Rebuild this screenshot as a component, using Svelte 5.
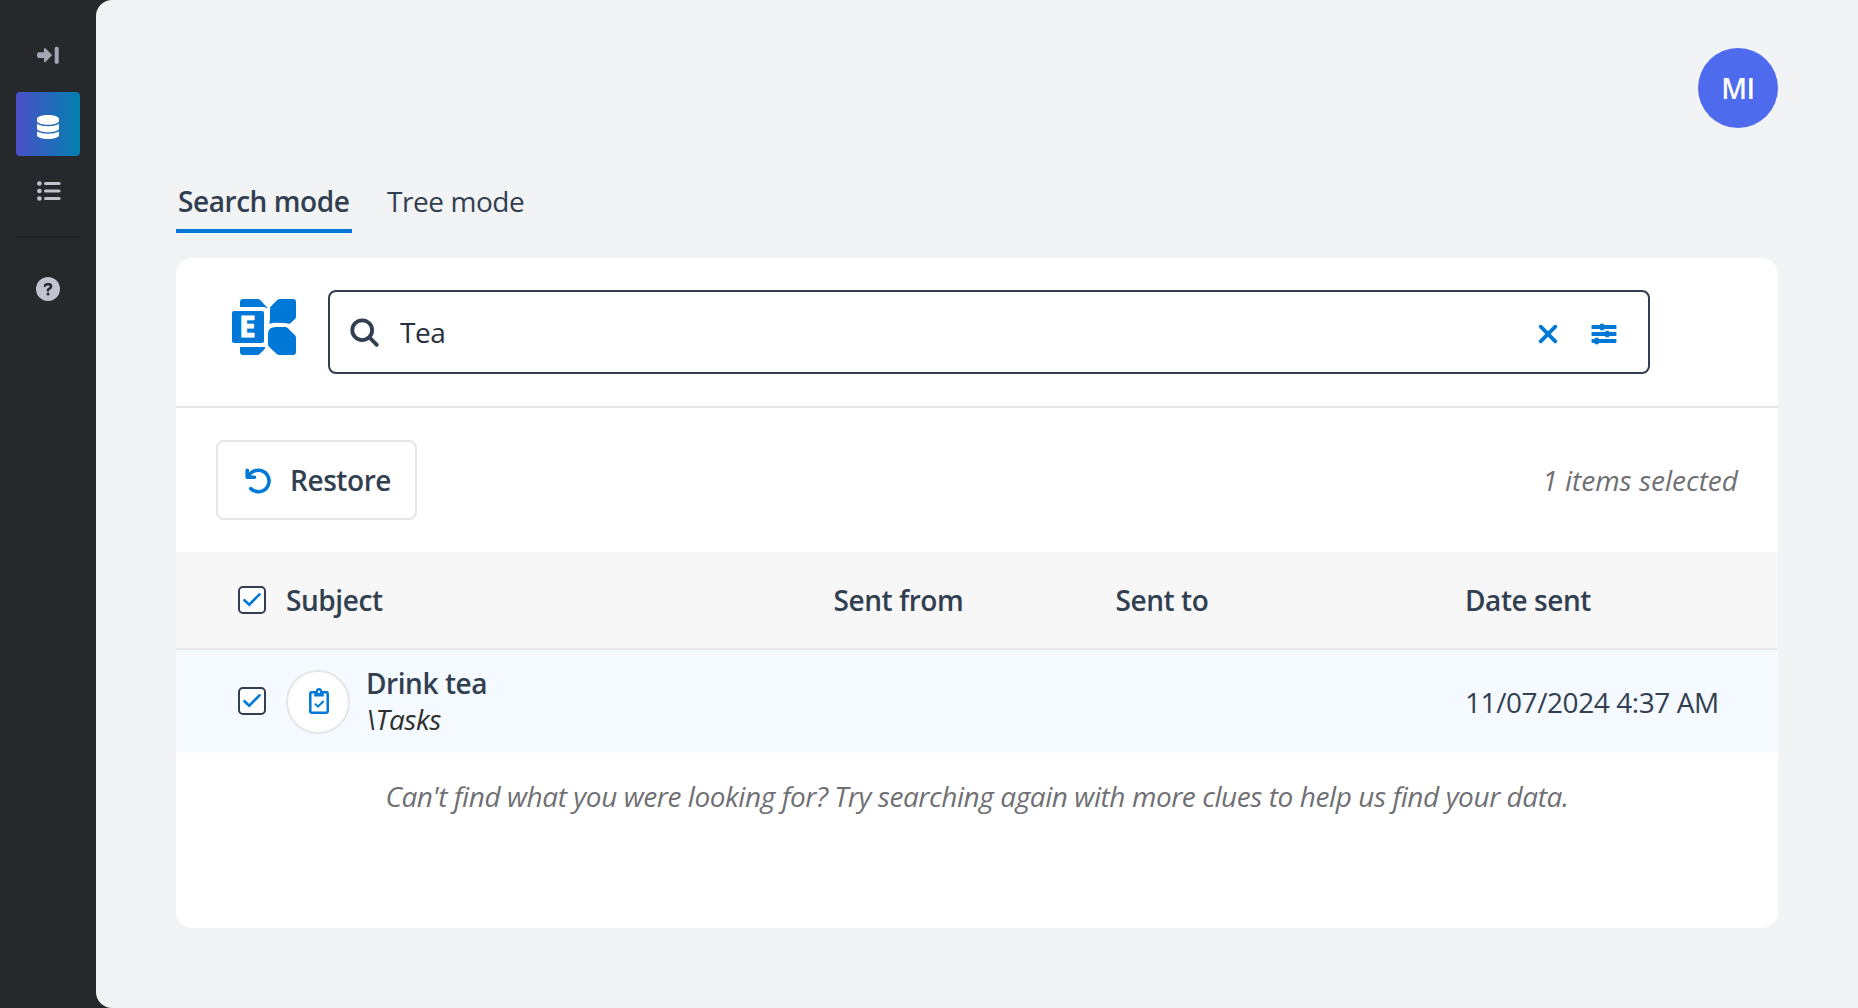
<script>
  const nav = ['expand', 'database', 'list'];
  let query = $state('Tea');
  const items = [
    { subject: 'Drink tea', path: '\\Tasks', from: '', to: '', date: '11/07/2024 4:37 AM' }
  ];
</script>

{#snippet checkbox()}
  <span class="check">
    <svg width="18" height="14" viewBox="0 0 18 14"><path d="M1.5 7.2 6.2 11.6 16.5 1.4" /></svg>
  </span>
{/snippet}

<div class="app">
  <nav class="sidebar">
    {#each nav as name}
      <div class="nav-item" class:active={name === 'database'}>
        {#if name === 'expand'}
          <svg class="expand" width="24" height="20" viewBox="0 0 24 20">
            <path d="M3 6.3H8V3.4Q8 1.2 9.7 2.6L15.6 8.6Q16.2 9.2 15.6 9.8L9.7 15.8Q8 17.2 8 15V12.1H3Q1 12.1 1 10.1V8.3Q1 6.3 3 6.3Z" />
            <rect x="18.7" y=".8" width="4" height="17" rx="1.6" />
          </svg>
        {:else if name === 'database'}
          <svg width="22" height="24" viewBox="0 0 448 512" preserveAspectRatio="none">
            <path d="M448 80v48c0 44.2-100.3 80-224 80S0 172.2 0 128V80C0 35.8 100.3 0 224 0S448 35.8 448 80zM393.2 214.7c20.8-7.4 39.9-16.9 54.8-28.6V288c0 44.2-100.3 80-224 80S0 332.2 0 288V186.1c14.9 11.8 34 21.2 54.8 28.6C99.7 230.7 159.5 240 224 240s124.3-9.3 169.2-25.3zM0 346.1c14.9 11.8 34 21.2 54.8 28.6C99.7 390.7 159.5 400 224 400s124.3-9.3 169.2-25.3c20.8-7.4 39.9-16.9 54.8-28.6V432c0 44.2-100.3 80-224 80S0 476.2 0 432V346.1z" />
          </svg>
        {:else}
          <svg class="list" width="24" height="20" viewBox="0 0 24 20">
            {#each [2.5, 10, 17.5] as y}
              <circle cx="2.4" cy={y} r="2.3" />
              <rect x="7" y={y - 1.5} width="16.6" height="3" rx="1.5" />
            {/each}
          </svg>
        {/if}
      </div>
    {/each}
    <div class="divider"></div>
    <div class="nav-item">
      <svg width="24" height="24" viewBox="0 0 24 24">
        <circle cx="12" cy="12" r="12" />
        <path class="mark" d="M8.9 8.9Q9.2 7.3 11 7.3H13Q15.1 7.5 15.1 9.4 15 10.7 13.8 11.4L12 12.5V13.4" />
        <circle class="dot" cx="12" cy="16.9" r="1.5" />
      </svg>
    </div>
  </nav>

  <main>
    <div class="top"><div class="avatar">MI</div></div>

    <div class="tabs">
      <div class="tab selected">Search mode</div>
      <div class="tab">Tree mode</div>
    </div>

    <section class="card">
      <div class="search-row">
        <svg class="logo" width="64" height="56" viewBox="0 0 64 56">
          <path d="M8 8V3Q8 0 11 0H25.5Q27.3 0 28.5 1.2L35.6 9 35 9.4Q33.5 8 31 8Z" />
          <path d="M38 8.3 45 1.3Q46.3 0 48 0H61Q64 0 64 3V17.5Q64 19 63 20L58.7 24.1Q57.8 25 56.5 24.7 53 23.8 44 23.8 40 23.9 37.3 25L38 20Z" />
          <path d="M36 34Q36.5 28 44 28H53Q54.8 28 56 29.2L62.8 36Q64 37.2 64 39V53Q64 56 61 56H47.5Q45.8 56 44.5 54.8L37.2 48Q36 46.8 36 45Z" />
          <path d="M8 48H33.2Q33.2 49.5 32 50.8L28 54.8Q26.8 56 25 56H11Q8 56 8 53Z" />
          <rect y="12" width="32" height="32" rx="2" />
          <text x="7.2" y="38.2">E</text>
        </svg>
        <div class="search-box">
          <svg class="glass" width="30" height="30" viewBox="0 0 30 30">
            <circle cx="12.2" cy="12.2" r="9.9" /><path d="M19.4 19.4 26.8 26.8" />
          </svg>
          <input bind:value={query} />
          <svg class="clear" width="20" height="20" viewBox="0 0 20 20"><path d="M2.7 2.7 17.3 17.3M17.3 2.7 2.7 17.3" /></svg>
          <svg class="tune" width="26" height="22" viewBox="0 0 26 22">
            <path d="M.6 4H25.4M.6 11H25.4M.6 18H25.4" />
            <path d="M11 .8V7.2M16.2 7.8V14.2M5.7 14.8V21.2" />
          </svg>
        </div>
      </div>

      <div class="toolbar">
        <button>
          <svg width="27" height="26" viewBox="0 0 27 26">
            <path d="M2.2 2.2V9.2H9.5M2.9 8.8C5.1 4.6 9 2.3 13.3 2.3A10.7 10.7 0 1 1 5.8 20.6" />
          </svg>
          Restore
        </button>
        <span class="count">1 items selected</span>
      </div>

      <div class="row head">
        {@render checkbox()}
        <span>Subject</span><span>Sent from</span><span>Sent to</span><span>Date sent</span>
      </div>

      {#each items as item}
        <div class="row item">
          {@render checkbox()}
          <div class="subject">
            <span class="badge">
              <svg width="20" height="26" viewBox="0 0 20 26">
                <rect x="1.3" y="4.3" width="17.4" height="20.4" rx="1.2" />
                <path class="clip" d="M5.2 3.2H6.7Q7.3 0 10 0T13.3 3.2H14.8V8.4H5.2Z" />
                <circle cx="10" cy="3.8" r="1.2" />
                <path class="tick" d="M6 15.6 9 18.6 14.6 13" />
              </svg>
            </span>
            <div class="names"><b>{item.subject}</b><i>{item.path}</i></div>
          </div>
          <span>{item.from}</span><span>{item.to}</span><span class="date">{item.date}</span>
        </div>
      {/each}

      <p class="hint">Can't find what you were looking for? Try searching again with more clues to help us find your data.</p>
    </section>
  </main>
</div>

<style>
  :global(body) { margin: 0; background: #27282c; }
  .app, .app * { box-sizing: border-box; }
  .app {
    display: flex; height: 1008px; background: #27282c; color: #323f50;
    font: 400 28px/36px "Open Sans", "Noto Sans", sans-serif;
    letter-spacing: -.43px;
  }
  svg { display: block; flex: none; }

  .sidebar { width: 96px; padding: 24px 16px; display: flex; flex-direction: column; }
  .nav-item { height: 64px; display: flex; align-items: center; justify-content: center; fill: #c0c4ce; border-radius: 4px; }
  .nav-item:first-child { margin-bottom: 4px; fill: #a3a6b4; }
  .nav-item.active { fill: #fff; background: linear-gradient(90deg, #4b50c8, #0380b0); padding-top: 6px; }
  .list { margin: 6px 0 0 1px; }
  .divider { height: 2px; background: #202124; margin: 16px 0 19px; }
  .mark { fill: none; stroke: #27282c; stroke-width: 2.4; stroke-linecap: round; stroke-linejoin: round; }
  .dot { fill: #27282c; }

  main { flex: 1; background: #f1f3f5; border-radius: 16px 0 0 16px; padding: 48px 80px; }
  .top { display: flex; justify-content: flex-end; }
  .avatar {
    width: 80px; height: 80px; border-radius: 50%; background: #4f6bed; color: #fff;
    display: flex; align-items: center; justify-content: center; font-weight: 600;
  }
  .tabs { display: flex; gap: 33px; margin-top: 48px; height: 57px; }
  .tab { padding: 7px 2px 0; height: 57px; }
  .selected { width: 176px; white-space: nowrap; font-weight: 600; border-bottom: 4px solid #0078d7; }

  .card { margin-top: 25px; height: 670px; background: #fff; border-radius: 16px; }
  .search-row { height: 150px; border-bottom: 2px solid #e6e6e6; padding: 32px 128px 0 56px; display: flex; gap: 32px; }
  .logo { margin-top: 9px; fill: #0078d7; }
  .logo text { font: 700 29px "Noto Sans", sans-serif; letter-spacing: 0; fill: #fff; stroke: #fff; stroke-width: 1.2; stroke-linejoin: round; }
  .search-box { flex: 1; height: 84px; border: 2px solid #323f50; border-radius: 8px; display: flex; align-items: center; padding: 0 31px 0 20px; }
  .glass { fill: none; stroke: #323f50; stroke-width: 3.8; stroke-linecap: round; margin-top: 2px; }
  input { flex: 1; min-width: 0; border: 0; outline: 0; padding: 0; margin-left: 20px; background: none; font: inherit; letter-spacing: inherit; color: #27303c; }
  .clear { fill: none; stroke: #0078d7; stroke-width: 3.8; stroke-linecap: round; margin-top: 4px; }
  .tune { fill: none; stroke: #0078d7; stroke-width: 3.8; margin: 4px 0 0 33px; }

  .toolbar { height: 144px; padding: 0 40px; display: flex; align-items: center; justify-content: space-between; }
  button {
    width: 201px; height: 80px; padding: 0 0 0 27px; display: flex; align-items: center; gap: 18px;
    border: 2px solid #e6e6e6; border-radius: 8px; background: #fff; font: inherit; letter-spacing: inherit; font-weight: 600; color: inherit;
  }
  button svg { fill: none; stroke: #0078d7; stroke-width: 3.6; stroke-linecap: round; stroke-linejoin: round; margin-top: 2px; }
  .count { color: #6f7073; font-style: italic; letter-spacing: 0; }

  .row { display: grid; grid-template-columns: 48px 547.5px 282px 349.5px auto; align-items: center; padding-left: 62px; }
  .head { height: 98px; background: #f7f7f7; border-bottom: 2px solid #e8e8e8; font-weight: 600; }
  .item { height: 103px; background: #f4faff; }
  .check { width: 28px; height: 28px; border: 2px solid #323f50; border-radius: 5px; background: #fff; display: flex; align-items: center; justify-content: center; }
  .check svg { fill: none; stroke: #0078d7; stroke-width: 2.6; stroke-linecap: round; }
  .item .check { margin-bottom: 2px; }
  .subject { display: flex; gap: 16px; align-items: center; }
  .badge { width: 64px; height: 64px; border-radius: 50%; border: 2px solid #e6e6e6; background: #fff; display: flex; align-items: center; justify-content: center; }
  .badge svg { fill: none; stroke: #0078d7; stroke-width: 2.5; margin: 0 0 2px 2px; }
  .badge .clip { fill: #0078d7; stroke: none; }
  .badge circle { fill: #fff; stroke: none; }
  .badge .tick { stroke-width: 2; }
  .names { display: flex; flex-direction: column; padding-bottom: 2px; }
  b { font-weight: 600; }
  i { color: #302f2e; }
  .hint { margin: 25px 0 0; text-align: center; font-style: italic; color: #6f7073; }
</style>
